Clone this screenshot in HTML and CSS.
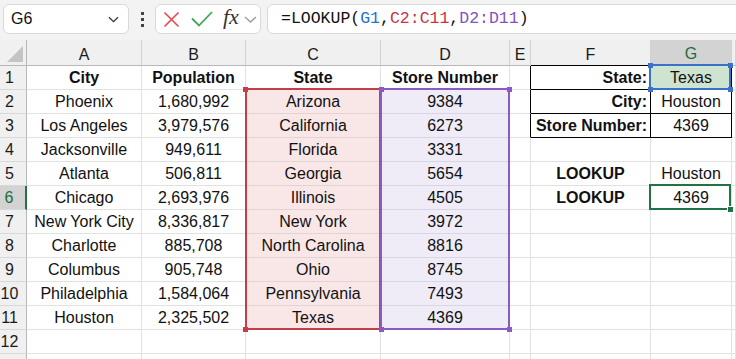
FILE: index.html
```html
<!DOCTYPE html>
<html lang="en">
<head>
    <meta charset="UTF-8">
    <title>LOOKUP</title>
    <link rel="stylesheet" href="styles.css">
</head>
<body>
    <div class="toolbar">
        <div class="namebox">
            <span>G6</span>
            <svg class="chev" width="11" height="7" viewBox="0 0 11 7"><path d="M1 1.2 L5.5 5.6 L10 1.2" fill="none" stroke="#333" stroke-width="1.3"/></svg>
        </div>
        <div class="dots"><i></i><i></i><i></i></div>
        <div class="fxbox">
            <svg width="17" height="17" viewBox="0 0 17 17"><path d="M1.5 1.5 L15.5 15.5 M15.5 1.5 L1.5 15.5" stroke="#e5484d" stroke-width="1.6"/></svg>
            <svg class="check" width="22" height="16" viewBox="0 0 22 16"><path d="M1 7.5 L8 14.5 L21 1" fill="none" stroke="#3ca65a" stroke-width="1.8"/></svg>
            <span class="fx">fx</span>
            <svg width="13" height="7" viewBox="0 0 13 7"><path d="M1 1 L6.5 6 L12 1" fill="none" stroke="#9a9a9a" stroke-width="1.3"/></svg>
        </div>
        <div class="formula">=LOOKUP(<span class="ref-g">G1</span>,<span class="ref-c">C2:C11</span>,<span class="ref-d">D2:D11</span>)</div>
    </div>

    <div class="sheet">
        <div class="ch corner"><span class="tri"></span></div>
        <div class="ch">A</div><div class="ch">B</div><div class="ch">C</div><div class="ch">D</div>
        <div class="ch">E</div><div class="ch blk">F</div><div class="ch sel">G</div><div class="ch"></div>

        <div class="rh">1</div>
        <div class="c b">City</div><div class="c b">Population</div><div class="c b">State</div><div class="c b">Store Number</div>
        <div class="c bl"></div><div class="c b r bx">State:</div><div class="c gf bx">Texas</div><div class="c"></div>

        <div class="rh">2</div>
        <div class="c">Phoenix</div><div class="c">1,680,992</div><div class="c pk">Arizona</div><div class="c lv">9384</div>
        <div class="c bl"></div><div class="c b r bx">City:</div><div class="c bx">Houston</div><div class="c"></div>

        <div class="rh">3</div>
        <div class="c">Los Angeles</div><div class="c">3,979,576</div><div class="c pk">California</div><div class="c lv">6273</div>
        <div class="c bl"></div><div class="c b r bx">Store Number:</div><div class="c bx">4369</div><div class="c"></div>

        <div class="rh">4</div>
        <div class="c">Jacksonville</div><div class="c">949,611</div><div class="c pk">Florida</div><div class="c lv">3331</div>
        <div class="c"></div><div class="c"></div><div class="c"></div><div class="c"></div>

        <div class="rh">5</div>
        <div class="c">Atlanta</div><div class="c">506,811</div><div class="c pk">Georgia</div><div class="c lv">5654</div>
        <div class="c"></div><div class="c b">LOOKUP</div><div class="c">Houston</div><div class="c"></div>

        <div class="rh sel">6</div>
        <div class="c">Chicago</div><div class="c">2,693,976</div><div class="c pk">Illinois</div><div class="c lv">4505</div>
        <div class="c"></div><div class="c b">LOOKUP</div><div class="c">4369</div><div class="c"></div>

        <div class="rh">7</div>
        <div class="c">New York City</div><div class="c">8,336,817</div><div class="c pk">New York</div><div class="c lv">3972</div>
        <div class="c"></div><div class="c"></div><div class="c"></div><div class="c"></div>

        <div class="rh">8</div>
        <div class="c">Charlotte</div><div class="c">885,708</div><div class="c pk">North Carolina</div><div class="c lv">8816</div>
        <div class="c"></div><div class="c"></div><div class="c"></div><div class="c"></div>

        <div class="rh">9</div>
        <div class="c">Columbus</div><div class="c">905,748</div><div class="c pk">Ohio</div><div class="c lv">8745</div>
        <div class="c"></div><div class="c"></div><div class="c"></div><div class="c"></div>

        <div class="rh">10</div>
        <div class="c">Philadelphia</div><div class="c">1,584,064</div><div class="c pk">Pennsylvania</div><div class="c lv">7493</div>
        <div class="c"></div><div class="c"></div><div class="c"></div><div class="c"></div>

        <div class="rh">11</div>
        <div class="c">Houston</div><div class="c">2,325,502</div><div class="c pk">Texas</div><div class="c lv">4369</div>
        <div class="c"></div><div class="c"></div><div class="c"></div><div class="c"></div>

        <div class="rh">12</div>
        <div class="c"></div><div class="c"></div><div class="c"></div><div class="c"></div>
        <div class="c"></div><div class="c"></div><div class="c"></div><div class="c"></div>

        <div class="rh"></div>
        <div class="c"></div><div class="c"></div><div class="c"></div><div class="c"></div>
        <div class="c"></div><div class="c"></div><div class="c"></div><div class="c"></div>

        <!-- reference highlights drawn over the grid -->
        <div class="range range-c"></div>
        <div class="range range-d"></div>
        <div class="range range-g"></div>
        <div class="active"></div>

        <span class="knob red" style="left:243px;top:47px"></span>
        <span class="knob red" style="left:243px;top:287px"></span>
        <span class="knob purple" style="left:379px;top:47px"></span>
        <span class="knob purple" style="left:507px;top:47px"></span>
        <span class="knob purple" style="left:379px;top:287px"></span>
        <span class="knob purple" style="left:507px;top:287px"></span>
        <span class="knob blue" style="left:648px;top:23px"></span>
        <span class="knob blue" style="left:728px;top:23px"></span>
        <span class="knob blue" style="left:648px;top:47px"></span>
        <span class="knob blue" style="left:728px;top:47px"></span>
        <span class="knob green" style="left:727px;top:166px"></span>
    </div>
</body>
</html>
```

FILE: styles.css
```css
* {
    box-sizing: border-box;
}
body {
    margin: 0;
    width: 736px;
    height: 359px;
    overflow: hidden;
    background: #fff;
    font-family: "Liberation Sans", Arial, sans-serif;
    color: #111;
}

/* toolbar */
.toolbar {
    height: 40px;
    background: #f3f3f3;
    display: flex;
    align-items: flex-start;
    padding-top: 4px;
    white-space: nowrap;
}
.toolbar > * {
    flex: none;
}
.namebox {
    margin-left: 3px;
    width: 126px;
    height: 30px;
    background: #fff;
    border: 1px solid #d9d9d9;
    border-radius: 6px;
    display: flex;
    align-items: center;
    padding: 0 9px 0 7px;
    font-size: 16px;
}
.namebox span {
    flex: 1;
}
.dots {
    width: 26px;
    height: 30px;
    display: flex;
    flex-direction: column;
    align-items: center;
    justify-content: center;
    gap: 3px;
}
.dots i {
    display: block;
    width: 3px;
    height: 3px;
    background: #444;
}
.fxbox {
    width: 106px;
    height: 30px;
    background: #fff;
    border: 1px solid #d9d9d9;
    border-radius: 6px;
    display: flex;
    align-items: center;
    padding-left: 7px;
}
.fxbox .check {
    margin-left: 11px;
}
.fx {
    font-family: "Liberation Serif", serif;
    font-style: italic;
    font-size: 22px;
    color: #333;
    margin: -4px 5px 0 10px;
}
.formula {
    margin-left: 6px;
    width: 480px;
    height: 30px;
    background: #fff;
    border: 1px solid #d9d9d9;
    border-radius: 6px;
    padding-left: 13px;
    line-height: 28px;
    font-family: "Liberation Mono", monospace;
    font-size: 16.5px;
    color: #111;
}
.ref-g { color: #1f72cf; }
.ref-c { color: #c9333f; }
.ref-d { color: #8251c0; }

/* grid */
.sheet {
    position: relative;
    display: grid;
    grid-template-columns: 27px 115px 104px 135px 129px 21px 120px 81px 1fr;
    grid-template-rows: 26px repeat(13, 24px);
    font-size: 16px;
}
.ch {
    background: #f0f0f0;
    border-right: 1px solid #d2d2d2;
    border-bottom: 1px solid #b8b8b8;
    display: flex;
    align-items: center;
    justify-content: center;
    padding-top: 4px;
    color: #1a1a1a;
}
.ch.corner {
    position: relative;
    border-right-color: #b8b8b8;
}
.tri {
    position: absolute;
    left: 7px;
    top: 6px;
    width: 16px;
    height: 16px;
    background: #c4c4c4;
    clip-path: polygon(100% 0, 100% 100%, 0 100%);
}
.ch.sel {
    background: #d3d3d3;
    color: #1e6b3d;
    border-bottom: 2px solid #217346;
}
.ch.blk {
    border-bottom-color: #000;
}
.rh {
    background: #f0f0f0;
    border-right: 1px solid #b8b8b8;
    border-bottom: 1px solid #d8d8d8;
    display: flex;
    align-items: center;
    justify-content: center;
    padding-right: 7px;
    color: #1a1a1a;
}
.rh.sel {
    background: #d3d3d3;
    color: #1e6b3d;
    border-right: 2px solid #217346;
}
.c {
    border-right: 1px solid #e1e1e1;
    border-bottom: 1px solid #e1e1e1;
    display: flex;
    align-items: center;
    justify-content: center;
    white-space: nowrap;
    padding-top: 1px;
}
.b { font-weight: bold; }
.r {
    justify-content: flex-end;
    padding-right: 3px;
}
.bx {
    border-right-color: #000;
    border-bottom-color: #000;
}
.bl {
    border-right-color: #000;
}
.pk {
    background: #f9e7e8;
    border-bottom-color: #e2d3d4;
}
.lv {
    background: #efecf8;
    border-bottom-color: #d9d5e2;
}
.gf {
    background: #cde4d1;
}

/* highlight boxes */
.range, .active {
    position: absolute;
    pointer-events: none;
}
.range-c {
    left: 245px;
    top: 48px;
    width: 136px;
    height: 242px;
    border: 2px solid #c43d48;
}
.range-d {
    left: 380px;
    top: 48px;
    width: 130px;
    height: 242px;
    border: 2px solid #8a5bc2;
}
.range-g {
    left: 649px;
    top: 24px;
    width: 82px;
    height: 26px;
    border: 2px solid #3a72c9;
}
.active {
    left: 649px;
    top: 144px;
    width: 82px;
    height: 26px;
    border: 2px solid #217346;
}
.knob {
    position: absolute;
    width: 5px;
    height: 5px;
}
.knob.red { background: #c43d48; }
.knob.purple { background: #8a5bc2; }
.knob.blue { background: #3a72c9; }
.knob.green {
    width: 7px;
    height: 7px;
    background: #217346;
    border: 1px solid #fff;
}
```
